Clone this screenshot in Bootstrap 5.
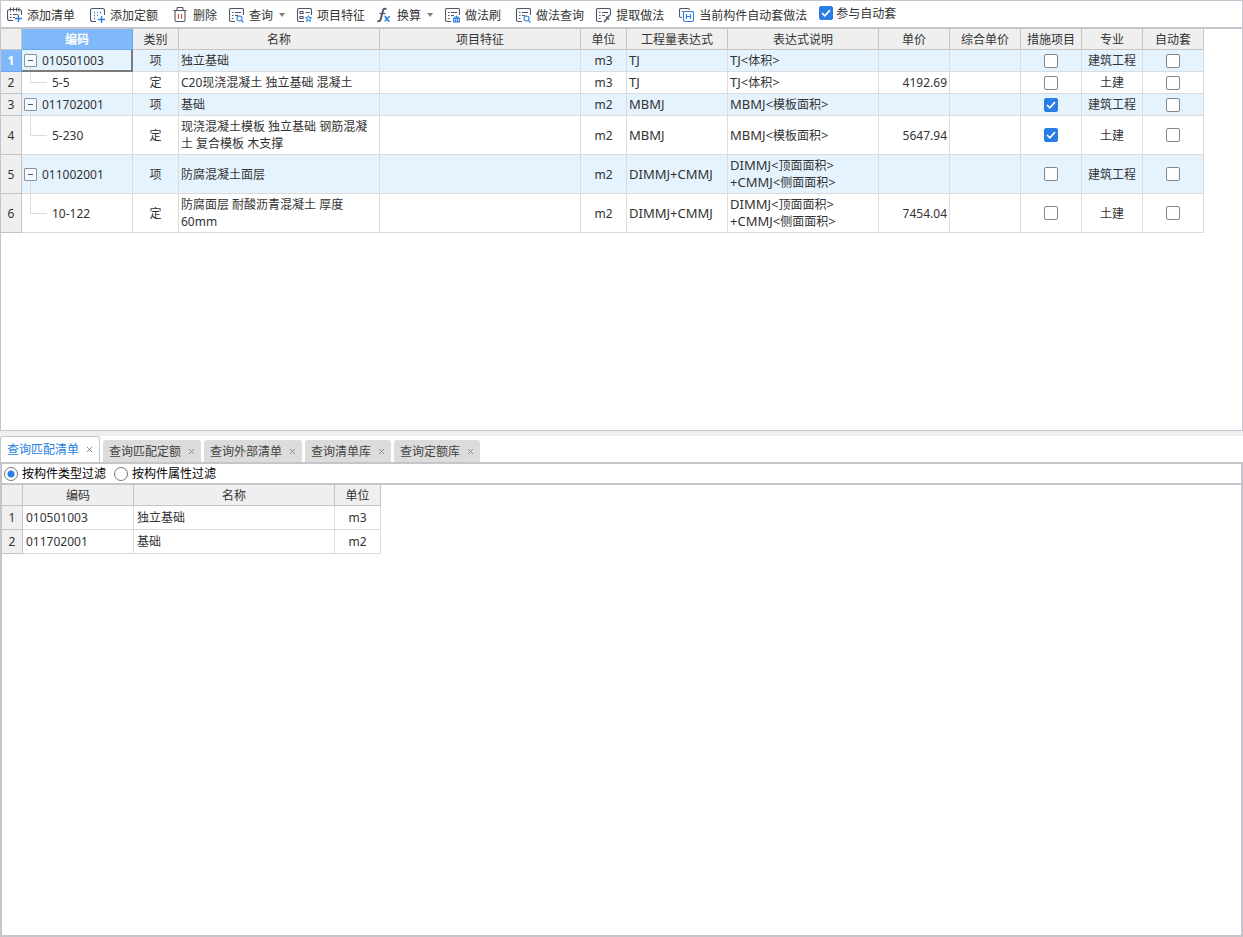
<!DOCTYPE html>
<html lang="zh-CN">
<head>
<meta charset="utf-8">
<meta name="viewport" content="width=device-width, initial-scale=1">
<title>构件做法</title>
<link href="https://cdn.jsdelivr.net/npm/bootstrap@5.3.0/dist/css/bootstrap.min.css" rel="stylesheet">
<style>
  :root { --frame: #c5c6cb; --grid: #dcdcdc; --head: #efefef; --headline: #c4c4c4; --accent: #287ee4; }
  body { font-family: "Noto Sans", "Noto Sans CJK SC", sans-serif; font-size: 12px; line-height: 17px; color: #333; background: #fff; }
  button { color: inherit; }

  .method-pane { flex: 0 0 46vh; border: 1px solid var(--frame); }
  .toolbar { min-height: 28px; padding: 2px 6px 0; border-bottom: 2px solid var(--frame); }
  .tool { display: flex; align-items: center; gap: 5px; padding: 0; border: 0; background: none; white-space: nowrap; margin-right: 12px; }
  .tool.wide { margin-right: 15px; }
  .tool svg { width: 15px; height: 16px; flex: none; fill: none; stroke: #4f5564; stroke-width: 1.1; }
  .tool svg .hl { stroke: #2f7fe0; }
  .drop-arrow { width: 6px; height: 4px; margin-left: 1px; background: #808080; clip-path: polygon(0 0, 100% 0, 50% 100%); }

  .tick { appearance: none; width: 14px; height: 14px; margin: 0; border: 1px solid #858585; border-radius: 2px; background: #fff; display: block; flex: none; }
  .tick:checked { border-color: var(--accent); background: var(--accent) url("data:image/svg+xml,%3Csvg xmlns='http://www.w3.org/2000/svg' viewBox='0 0 12 12'%3E%3Cpath d='M2 6l2.8 2.8L10 3.2' fill='none' stroke='%23fff' stroke-width='1.7'/%3E%3C/svg%3E") center / 12px no-repeat; }
  td .tick { margin: 0 auto; }
  .auto-join { gap: 3px; padding-bottom: 4px; white-space: nowrap; }

  .sheet { table-layout: fixed; border-collapse: separate; border-spacing: 0; width: 0; }
  .sheet th, .sheet td { border-right: 1px solid var(--grid); border-bottom: 1px solid var(--grid); padding: 2px; vertical-align: middle; }
  .sheet th { background: var(--head); border-color: var(--headline); font-weight: 400; text-align: center; padding: 2px 0 1px; white-space: nowrap; }
  .sheet tbody th { padding: 2px 0; }
  .sheet .item td { background-color: #e5f3ff; }
  .sheet th.current { background: #80b9fa; border-color: #6aa7ee; color: #fff; font-weight: 700; }
  .sheet .expr { font-size: 13px; }
  .w-no { width: 21px; } .w-code { width: 111px; } .w-kind { width: 46px; } .w-name { width: 201px; }
  .w-expr { width: 101px; } .w-desc { width: 151px; } .w-price { width: 71px; } .w-flag { width: 61px; }

  /* tree lines are painted behind the cell text */
  .item .node { background: linear-gradient(#dcdcdc, #dcdcdc) 8px 100% / 1px 50% no-repeat; }
  .leaf { background: linear-gradient(#dcdcdc, #dcdcdc) 8px 0 / 1px 50% no-repeat, linear-gradient(#dcdcdc, #dcdcdc) 8px 50% / 17px 1px no-repeat; }
  .sheet td.leaf { padding-left: 30px; }
  .sheet td.focused { border-right: 2px solid #7b7b7b; border-bottom: 2px solid #7b7b7b; padding-bottom: 1px; }
  .node-line { display: flex; align-items: center; gap: 5px; }
  .fold { width: 13px; height: 13px; padding: 0; border: 1px solid #8b9299; border-radius: 1px; background: #f4faff linear-gradient(#555, #555) center / 5px 1px no-repeat; flex: none; }

  .query-pane { min-height: 0; border-top: 5px solid #efefef; }
  .tab-row { height: 26px; gap: 3px; }
  .tab-item { display: flex; align-items: center; height: 22px; padding: 0 6px; background: #dcdcdc; border-radius: 3px 3px 0 0; color: #444; }
  .tab-item button { padding: 0; border: 0; background: none; line-height: 17px; white-space: nowrap; }
  .tab-item .shut { width: 8px; margin-left: 6px; color: #999; }
  .tab-item .shut svg { display: block; width: 5px; height: 5px; margin: 0 auto; stroke: #8c8c8c; }
  .tab-item.on { height: 26px; background: #fff; border: 1px solid var(--frame); border-bottom: 0; color: var(--accent); }
  .result-box { border: 2px solid var(--frame); min-height: 0; }
  .filter-row { height: 21px; padding-left: 2px; border-bottom: 2px solid var(--frame); color: #000; gap: 8px; }
  .filter-row label { display: flex; align-items: center; gap: 4px; white-space: nowrap; }
  .dot { appearance: none; width: 14px; height: 14px; margin: 0; border: 1px solid #777; border-radius: 50%; background: #fff; flex: none; }
  .dot:checked { background: radial-gradient(circle, var(--accent) 3px, #fff 4px); }
  .matches tbody td { padding: 3px; }
  .matches tbody th { padding: 3px 0; }
</style>
</head>
<body class="vh-100 d-flex flex-column overflow-hidden">

<svg class="d-none">
  <symbol id="i-sheet" viewBox="0 0 15 16"><path d="M6 14.500H2Q.500 14.500.500 13V3Q.500 1.500 2 1.500H13Q14.500 1.500 14.500 3V8M3 5.500h1.500M6 5.500h6M3 8.500h1.500M6 8.500h3M3 11.500h1.500"/></symbol>
</svg>

<main class="method-pane d-flex flex-column overflow-hidden">
  <div class="toolbar d-flex" role="toolbar" aria-label="做法工具">
    <button class="tool wide" type="button">
      <svg viewBox="0 0 15 16"><path d="M6 13.500H2.500Q.500 13.500.500 11.500V4.500Q.500 2.500 2.500 2.500H12.500Q14.500 2.500 14.500 4.500V8M3.500.500v4M6.500.500v4M9.500.500v4M12 .500v4M3 7.500h1.500M6 7.500h5M3 10.500h1.500M6 10.500h2"/><path class="hl" stroke-width="1.400" d="M11.500 8v7M8 11.500h7"/></svg>添加清单</button>
    <button class="tool wide" type="button">
      <svg viewBox="0 0 15 16"><path d="M6 14.500H2.500Q.500 14.500.500 12.500V3.500Q.500 1.500 2.500 1.500H12.500Q14.500 1.500 14.500 3.500V8"/><path class="hl" stroke-width="1.400" d="M11.500 9v7M8 12.500h7M4 5.500h1M7 5.500h1M10 5.500h1M4 8.500h1M7 8.500h1M4 11.500h1"/></svg>添加定额</button>
    <button class="tool" type="button">
      <svg viewBox="0 0 15 16"><path d="M.500 3.500h13M4 3.500v-2q0-1 1-1h4q1 0 1 1v2M2 3.500V13q0 1.500 1.500 1.500h7q1.500 0 1.500-1.500V3.500"/><path stroke="#d84a4a" d="M5.500 7v5M8.500 7v5"/></svg>删除</button>
    <button class="tool" type="button">
      <svg viewBox="0 0 15 16"><use href="#i-sheet"/><circle class="hl" cx="10.500" cy="11.500" r="2.500"/><path class="hl" d="M12.500 13.500l2 2"/></svg>查询<span class="drop-arrow"></span></button>
    <button class="tool" type="button">
      <svg viewBox="0 0 15 16"><path d="M7 14.500H2Q.500 14.500.500 13V3Q.500 1.500 2 1.500H13Q14.500 1.500 14.500 3V8M3 4.500h3v2H3zM3 9.500h3v2H3zM8.500 5.500h4"/><path class="hl" stroke-width="1" fill="#cfe4ff" d="M11.500 8.500l.9 2 2.100.2-1.500 1.500.4 2.200-1.900-1.100-1.900 1.100.4-2.200-1.500-1.500 2.100-.2z"/></svg>项目特征</button>
    <button class="tool" type="button">
      <svg viewBox="0 0 15 16"><path stroke-width="1.900" d="M.500 14c2 .8 3-.5 3.600-3L5.800 4c.5-2 1.700-2.800 3.700-2.200"/><path stroke-width="1.200" d="M2.500 6.500h6"/><path class="hl" stroke-width="2" d="M7.500 9.500c2-.5 2 5 5 4.500"/><path class="hl" stroke-width="1.400" d="M13 9.500c-1.500 0-4 4.500-5.500 4.500"/></svg>换算<span class="drop-arrow"></span></button>
    <button class="tool wide" type="button">
      <svg viewBox="0 0 15 16"><use href="#i-sheet"/><path class="hl" fill="#cfe4ff" d="M8.500 15v-3.500h6V15zM11.500 8.500v3M10.500 12.500v2M12.500 12.500v2M9 11.500l1-1.500h3l1 1.500"/></svg>做法刷</button>
    <button class="tool" type="button">
      <svg viewBox="0 0 15 16"><use href="#i-sheet"/><circle class="hl" cx="10.500" cy="11.500" r="2.500"/><path class="hl" d="M12.500 13.500l2 2"/></svg>做法查询</button>
    <button class="tool wide" type="button">
      <svg viewBox="0 0 15 16"><use href="#i-sheet"/><path stroke-width="1.600" d="M8 15l3.500-4M10 9.500l3 3M11.500 10.500l2.500-2.500"/></svg>提取做法</button>
    <button class="tool" type="button">
      <svg viewBox="0 0 15 16"><path d="M3 10.500H2Q.500 10.500.500 9V3Q.500 1.500 2 1.500H9Q10.500 1.500 10.500 3M3 4.500h1.500"/><rect class="hl" x="4.500" y="4.500" width="10" height="10" rx="1.500"/><path class="hl" d="M7.500 7v5M11.500 7v5M7.500 9.500h4"/></svg>当前构件自动套做法</button>
    <label class="auto-join d-flex align-items-center"><input class="tick" type="checkbox" checked>参与自动套</label>
  </div>

  <div class="flex-fill overflow-auto">
    <table class="sheet">
      <colgroup><col class="w-no"><col class="w-code"><col class="w-kind"><col class="w-name"><col class="w-name"><col class="w-kind"><col class="w-expr"><col class="w-desc"><col class="w-price"><col class="w-price"><col class="w-flag"><col class="w-flag"><col class="w-flag"></colgroup>
      <thead>
        <tr><th></th><th class="current">编码</th><th>类别</th><th>名称</th><th>项目特征</th><th>单位</th><th>工程量表达式</th><th>表达式说明</th><th>单价</th><th>综合单价</th><th>措施项目</th><th>专业</th><th>自动套</th></tr>
      </thead>
      <tbody>
        <tr class="item"><th class="current">1</th><td class="node focused"><div class="node-line"><button class="fold" type="button" aria-label="折叠"></button><span>010501003</span></div></td><td class="text-center">项</td><td>独立基础</td><td></td><td class="text-center">m3</td><td class="expr">TJ</td><td><span class="expr">TJ&lt;</span>体积<span class="expr">&gt;</span></td><td></td><td></td><td><input class="tick" type="checkbox" aria-label="措施项目"></td><td class="text-center">建筑工程</td><td><input class="tick" type="checkbox" aria-label="自动套"></td></tr>
        <tr><th>2</th><td class="leaf">5-5</td><td class="text-center">定</td><td>C20现浇混凝土 独立基础 混凝土</td><td></td><td class="text-center">m3</td><td class="expr">TJ</td><td><span class="expr">TJ&lt;</span>体积<span class="expr">&gt;</span></td><td class="text-end">4192.69</td><td></td><td><input class="tick" type="checkbox" aria-label="措施项目"></td><td class="text-center">土建</td><td><input class="tick" type="checkbox" aria-label="自动套"></td></tr>
        <tr class="item"><th>3</th><td class="node"><div class="node-line"><button class="fold" type="button" aria-label="折叠"></button><span>011702001</span></div></td><td class="text-center">项</td><td>基础</td><td></td><td class="text-center">m2</td><td class="expr">MBMJ</td><td><span class="expr">MBMJ&lt;</span>模板面积<span class="expr">&gt;</span></td><td></td><td></td><td><input class="tick" type="checkbox" checked aria-label="措施项目"></td><td class="text-center">建筑工程</td><td><input class="tick" type="checkbox" aria-label="自动套"></td></tr>
        <tr><th>4</th><td class="leaf">5-230</td><td class="text-center">定</td><td>现浇混凝土模板 独立基础 钢筋混凝土 复合模板 木支撑</td><td></td><td class="text-center">m2</td><td class="expr">MBMJ</td><td><span class="expr">MBMJ&lt;</span>模板面积<span class="expr">&gt;</span></td><td class="text-end">5647.94</td><td></td><td><input class="tick" type="checkbox" checked aria-label="措施项目"></td><td class="text-center">土建</td><td><input class="tick" type="checkbox" aria-label="自动套"></td></tr>
        <tr class="item"><th>5</th><td class="node"><div class="node-line"><button class="fold" type="button" aria-label="折叠"></button><span>011002001</span></div></td><td class="text-center">项</td><td>防腐混凝土面层</td><td></td><td class="text-center">m2</td><td class="expr">DIMMJ+CMMJ</td><td><span class="expr">DIMMJ&lt;</span>顶面面积<span class="expr">&gt;</span><br><span class="expr">+CMMJ&lt;</span>侧面面积<span class="expr">&gt;</span></td><td></td><td></td><td><input class="tick" type="checkbox" aria-label="措施项目"></td><td class="text-center">建筑工程</td><td><input class="tick" type="checkbox" aria-label="自动套"></td></tr>
        <tr><th>6</th><td class="leaf">10-122</td><td class="text-center">定</td><td>防腐面层 耐酸沥青混凝土 厚度60mm</td><td></td><td class="text-center">m2</td><td class="expr">DIMMJ+CMMJ</td><td><span class="expr">DIMMJ&lt;</span>顶面面积<span class="expr">&gt;</span><br><span class="expr">+CMMJ&lt;</span>侧面面积<span class="expr">&gt;</span></td><td class="text-end">7454.04</td><td></td><td><input class="tick" type="checkbox" aria-label="措施项目"></td><td class="text-center">土建</td><td><input class="tick" type="checkbox" aria-label="自动套"></td></tr>
      </tbody>
    </table>
  </div>
</main>

<section class="query-pane flex-fill d-flex flex-column">
  <div class="tab-row d-flex align-items-end">
    <div class="tab-item on"><button type="button">查询匹配清单</button><button class="shut" type="button" aria-label="关闭"><svg viewBox="0 0 5 5"><path d="M0 0l5 5M5 0L0 5"/></svg></button></div>
    <div class="tab-item"><button type="button">查询匹配定额</button><button class="shut" type="button" aria-label="关闭"><svg viewBox="0 0 5 5"><path d="M0 0l5 5M5 0L0 5"/></svg></button></div>
    <div class="tab-item"><button type="button">查询外部清单</button><button class="shut" type="button" aria-label="关闭"><svg viewBox="0 0 5 5"><path d="M0 0l5 5M5 0L0 5"/></svg></button></div>
    <div class="tab-item"><button type="button">查询清单库</button><button class="shut" type="button" aria-label="关闭"><svg viewBox="0 0 5 5"><path d="M0 0l5 5M5 0L0 5"/></svg></button></div>
    <div class="tab-item"><button type="button">查询定额库</button><button class="shut" type="button" aria-label="关闭"><svg viewBox="0 0 5 5"><path d="M0 0l5 5M5 0L0 5"/></svg></button></div>
  </div>
  <div class="result-box flex-fill d-flex flex-column">
    <div class="filter-row d-flex align-items-center">
      <label><input class="dot" type="radio" name="filter" checked>按构件类型过滤</label>
      <label><input class="dot" type="radio" name="filter">按构件属性过滤</label>
    </div>
    <div class="flex-fill overflow-auto">
      <table class="sheet matches">
        <colgroup><col class="w-no"><col class="w-code"><col class="w-name"><col class="w-kind"></colgroup>
        <thead><tr><th></th><th>编码</th><th>名称</th><th>单位</th></tr></thead>
        <tbody>
          <tr><th>1</th><td>010501003</td><td>独立基础</td><td class="text-center">m3</td></tr>
          <tr><th>2</th><td>011702001</td><td>基础</td><td class="text-center">m2</td></tr>
        </tbody>
      </table>
    </div>
  </div>
</section>

<script src="https://cdn.jsdelivr.net/npm/bootstrap@5.3.0/dist/js/bootstrap.bundle.min.js"></script>
</body>
</html>
